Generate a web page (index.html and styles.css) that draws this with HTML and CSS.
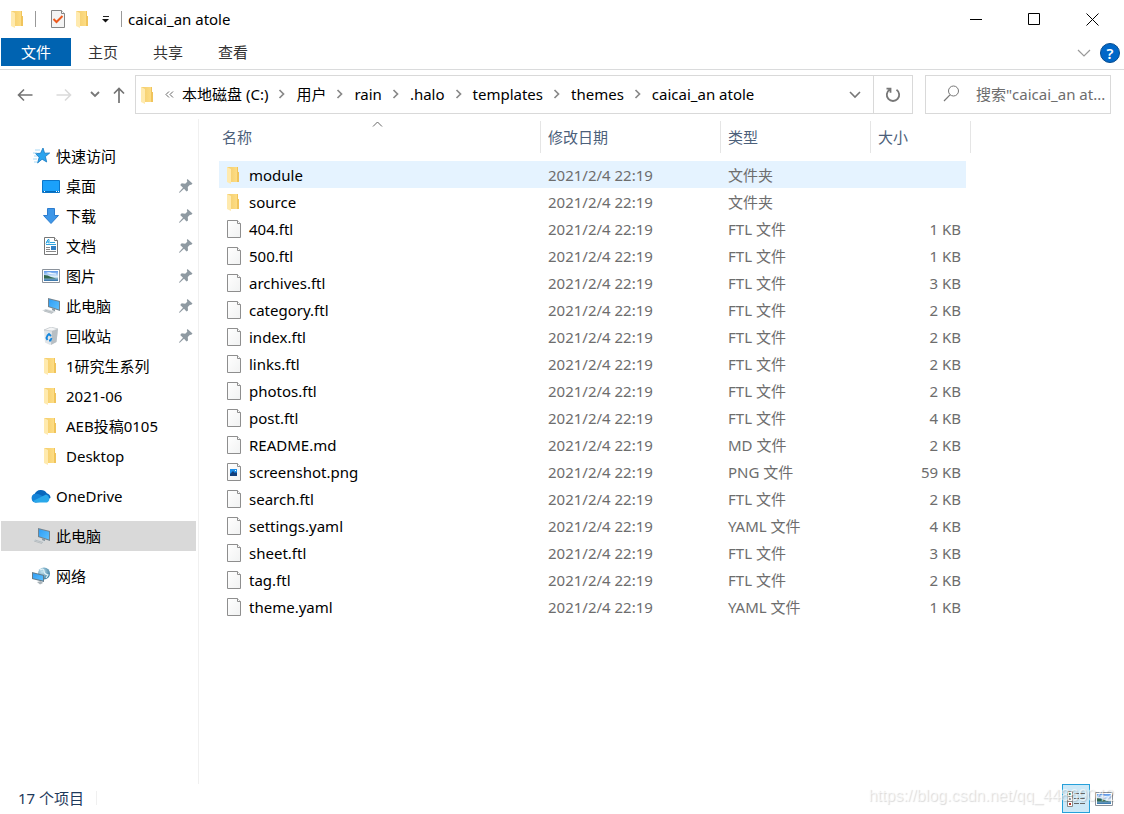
FILE: index.html
```html
<!DOCTYPE html>
<html lang="zh-CN">
<head>
<meta charset="utf-8">
<title>caicai_an atole</title>
<link rel="stylesheet" href="styles.css">
</head>
<body>
<svg class="sprite" aria-hidden="true">
  <defs>
    <linearGradient id="gFold" x1="0" y1="0" x2="1" y2="0"><stop offset="0" stop-color="#f3cc6a"/><stop offset="1" stop-color="#ffe08a"/></linearGradient>
    <linearGradient id="gPage" x1="0" y1="0" x2="1" y2="1"><stop offset="0" stop-color="#ffffff"/><stop offset="1" stop-color="#f1f2f2"/></linearGradient>
    <linearGradient id="gBlue" x1="0" y1="0" x2="1" y2="1"><stop offset="0" stop-color="#2f9df4"/><stop offset="1" stop-color="#5cc0ff"/></linearGradient>
    <linearGradient id="gSky" x1="0" y1="0" x2="0" y2="1"><stop offset="0" stop-color="#5b97ea"/><stop offset=".6" stop-color="#e6f4fc"/><stop offset=".7" stop-color="#8fb9cf"/><stop offset="1" stop-color="#2e6ea8"/></linearGradient>
    <radialGradient id="gGlobe" cx=".35" cy=".35" r=".7"><stop offset="0" stop-color="#c5e4f0"/><stop offset="1" stop-color="#3c7ea2"/></radialGradient>
  </defs>
  <symbol id="folder" viewBox="0 0 18 18"><path d="M2 1h11v5h1v10H6z" fill="url(#gFold)"/><path d="M12 1h1v5h1v10h-2z" fill="#f0c45c"/><path d="M2 1l4 2v15l-4-2z" fill="#ffeaae"/></symbol>
  <symbol id="page" viewBox="0 0 18 18"><path d="M2.500.5h10l3 3v14h-13z" fill="url(#gPage)" stroke="#8e8e8e"/><path d="M12.500.5v3h3" fill="#fff" stroke="#8e8e8e"/></symbol>
  <symbol id="picfile" viewBox="0 0 18 18"><use href="#page"/><path d="M5 6h7v7H5z" fill="#1e8ee8"/><path d="M5 11l3-3 2 2 1-1 1 1v3H5z" fill="#123f7c"/><path d="M10 7h1v1h-1z" fill="#fff"/></symbol>
  <symbol id="checkdoc" viewBox="0 0 18 18"><path d="M2.500.5h10l3 3v14h-13z" fill="#f4f4f4" stroke="#858585"/><path d="M12.500.5v3h3" fill="#fff" stroke="#858585"/><path d="M4.500 9l3 3L13.500 6" fill="none" stroke="#ed5a1f" stroke-width="2"/></symbol>
  <symbol id="star" viewBox="0 0 18 18"><path d="M11 1l1.600 5.200 5.100-.2-4.300 3.600 1.300 5.400-4.600-2.800L5.600 16l1.500-5.600L3.500 6.500l5-.2z" fill="#2ba4ee" stroke="#1579c0" stroke-width=".8"/><path d="M3 3h5M1 6h4M2 9h3M1 12h4M2 15h3" stroke="#8fcff5" stroke-width=".8"/></symbol>
  <symbol id="desktop" viewBox="0 0 18 18"><path d="M.5 3.500h17v12H.5z" fill="#1ba1fb" stroke="#0b76ca"/><path d="M1 14h16v1H1z" fill="#066bb8"/><path d="M2 14h1v1H2zm12 0h1v1h-1zm2 0h1v1h-1z" fill="#fff"/></symbol>
  <symbol id="down" viewBox="0 0 18 18"><path d="M5.500 1.500h7v7h4L9 16.500 1.500 8.500h4z" fill="#3e97e8" stroke="#2c7cce"/></symbol>
  <symbol id="doc" viewBox="0 0 18 18"><path d="M2.500.5h10l3 3v14h-13z" fill="#fff" stroke="#777"/><path d="M12.500.5v3h3" fill="#fff" stroke="#777"/><path d="M4 6.500l2-4h1v4M4.500 5H7" fill="none" stroke="#1e9fe0"/><path d="M8 5.500h5M4 7.500h10" stroke="#30a5e0"/><path d="M4 10.500h4M4 12.500h4M4 14.500h10" stroke="#888"/><path d="M9 9h5v4H9z" fill="#3280c4"/></symbol>
  <symbol id="photo" viewBox="0 0 18 18"><path d="M.5 2.500h17v13H.5z" fill="#fff" stroke="#8b929b"/><path d="M2 4h14v10H2z" fill="url(#gSky)"/><path d="M2 8q4 0 7 2l5 1.500H2z" fill="#33684f"/><path d="M4 6q3-1.500 6 0l4 .5v1L8 7z" fill="#eef7ff"/></symbol>
  <symbol id="pc" viewBox="0 0 18 18"><path d="M6 1l12 3v10L6 10z" fill="#73838e"/><path d="M7 2.200l10 2.600v7.800L7 9.200z" fill="url(#gBlue)"/><path d="M10 11.200l3 1v2l-3-1z" fill="#8b98a0"/><path d="M0 13.500l4-1.500 10 2.500-4 2z" fill="#d4d9dc"/><path d="M3 13l8 2.500M2 14l8 2.500" stroke="#9fa8ad" stroke-width=".6"/></symbol>
  <symbol id="bin" viewBox="0 0 18 18"><path d="M2 3l7-3 7 2-1.500 13L8 18l-5-2.500z" fill="#e1e5e8"/><path d="M10 4l6-2-1.500 13L9 18z" fill="#b8bfc4"/><path d="M2 3l7-3 7 2-6 2z" fill="#f4f5f6" stroke="#b7bdc2" stroke-width=".6"/><path d="M5 9l2-2 2 2M9.500 11l-1 2.500H7M5.500 13L4.400 11l1-2" fill="none" stroke="#1486dc" stroke-width="1.800"/></symbol>
  <symbol id="cloud" viewBox="0 0 20 14"><path d="M5 13.500A4.500 4.500 0 0 1 3.500 5a7 7 0 0 1 12.300-.8A5 5 0 0 1 19.500 9L9 13z" fill="#0767bd"/><path d="M3.500 5A6 6 0 0 1 9 5.800L15 9 4.500 13.500A4.400 4.400 0 0 1 3.500 5z" fill="#1483d8"/><path d="M2 12l9-4.500 4-2a4.300 4.300 0 0 1 1 8H5a5 5 0 0 1-3-1.500z" fill="#29a8ea"/></symbol>
  <symbol id="net" viewBox="0 0 18 18"><circle cx="12" cy="6.500" r="6" fill="url(#gGlobe)"/><path d="M8 3q4-2 4 1t4 4l-2 3" fill="none" stroke="#e2f3f8" stroke-width="1.200"/><path d="M0 5l12 3v7L0 12z" fill="#647c8a"/><path d="M1 6.300l10 2.500v4.800L1 11.200z" fill="url(#gBlue)"/><path d="M5 15l4-1 2 2-3 1.500z" fill="#a9b3b9"/></symbol>
  <symbol id="pin" viewBox="0 0 14 14"><path d="M8.500 0L13.500 4.500l-1.500 1.500-1-.2L8.800 8l.2 3.500L7.500 12.500 5 9.700 1 13.500 0 14l.4-1.200L4 8.700 1.200 6l1.500-1.700 3.500.4L8.300 2.800 7.800 1z" fill="#8f9aa2"/></symbol>
  <symbol id="sep" viewBox="0 0 8 10"><path d="M1.500 1L5.500 5 1.500 9" fill="none" stroke="#888" stroke-width="1.700"/></symbol>
</svg>

<header class="titlebar">
  <div class="quick">
    <svg class="ico"><use href="#folder"/></svg>
    <span class="bar"></span>
    <button class="bare" aria-label="属性"><svg class="ico"><use href="#checkdoc"/></svg></button>
    <button class="bare" aria-label="新建文件夹"><svg class="ico"><use href="#folder"/></svg></button>
    <button class="bare caret" aria-label="自定义快速访问工具栏"><svg width="8" height="8"><path d="M1 1.500h6" stroke="#222"/><path d="M0 4h7L3.500 7.500z" fill="#111"/></svg></button>
    <span class="bar"></span>
  </div>
  <h1 class="title">caicai_an atole</h1>
  <div class="controls">
    <button class="bare control" aria-label="最小化"><svg width="13" height="13"><path d="M0 6.500h12" stroke="#000"/></svg></button>
    <button class="bare control" aria-label="最大化"><svg width="13" height="13"><path d="M.5.5h11v11H.5z" fill="none" stroke="#000"/></svg></button>
    <button class="bare control" aria-label="关闭"><svg width="13" height="13"><path d="M.5.5l12 12m0-12l-12 12" stroke="#000"/></svg></button>
  </div>
</header>

<nav class="ribbon">
  <button class="bare tab tab-file">文件</button>
  <button class="bare tab">主页</button>
  <button class="bare tab">共享</button>
  <button class="bare tab">查看</button>
  <div class="ribbon-end">
    <button class="bare" aria-label="展开功能区"><svg width="14" height="8"><path d="M1 1l6 6 6-6" fill="none" stroke="#999" stroke-width="1.200"/></svg></button>
    <button class="bare help" aria-label="帮助">?</button>
  </div>
</nav>

<div class="addressbar">
  <div class="history">
    <button class="bare nav" aria-label="返回"><svg width="16" height="14"><path d="M15.500 7H1.500M7 1.500L1.500 7 7 12.500" fill="none" stroke="#737373" stroke-width="1.600"/></svg></button>
    <button class="bare nav" aria-label="前进"><svg width="16" height="14"><path d="M.5 7h14M9 1.500L14.500 7 9 12.500" fill="none" stroke="#dadada" stroke-width="1.600"/></svg></button>
    <button class="bare nav-small" aria-label="最近浏览的位置"><svg width="10" height="7"><path d="M1 1l4 4 4-4" fill="none" stroke="#777" stroke-width="1.800"/></svg></button>
    <button class="bare nav-small" aria-label="上移"><svg width="12" height="16"><path d="M6 16V1.500M1 6.500l5-5 5 5" fill="none" stroke="#737373" stroke-width="1.700"/></svg></button>
  </div>
  <div class="address">
    <svg class="ico"><use href="#folder"/></svg>
    <button class="bare more" aria-label="更多"><svg width="9" height="7"><path d="M4 .5l-3 3 3 3M8 .5l-3 3 3 3" fill="none" stroke="#666"/></svg></button>
    <div class="crumbs">
      <a href="#c">本地磁盘 (C:)</a><svg class="sep"><use href="#sep"/></svg>
      <a href="#users">用户</a><svg class="sep"><use href="#sep"/></svg>
      <a href="#rain">rain</a><svg class="sep"><use href="#sep"/></svg>
      <a href="#halo">.halo</a><svg class="sep"><use href="#sep"/></svg>
      <a href="#templates">templates</a><svg class="sep"><use href="#sep"/></svg>
      <a href="#themes">themes</a><svg class="sep"><use href="#sep"/></svg>
      <a href="#theme">caicai_an atole</a>
    </div>
    <button class="bare drop" aria-label="以前的位置"><svg width="12" height="8"><path d="M1 1l5 5 5-5" fill="none" stroke="#777" stroke-width="1.600"/></svg></button>
    <button class="bare refresh" aria-label="刷新"><svg width="16" height="16"><path d="M11.500 2.700A6.200 6.200 0 1 1 4.500 2.700M1.500 1.700h4v4" fill="none" stroke="#777" stroke-width="1.800"/></svg></button>
  </div>
  <label class="search">
    <svg width="17" height="17"><circle cx="10.500" cy="6" r="5" fill="none" stroke="#777"/><path d="M7 9.800L1 16" stroke="#777" stroke-width="1.200"/></svg>
    <input type="text" aria-label="搜索" placeholder="搜索&quot;caicai_an at...">
  </label>
</div>

<main class="content">
  <nav class="side">
    <a class="place" href="#quick"><svg class="ico"><use href="#star"/></svg>快速访问</a>
    <a class="place child" href="#desktop"><svg class="ico"><use href="#desktop"/></svg>桌面<svg class="pin"><use href="#pin"/></svg></a>
    <a class="place child" href="#downloads"><svg class="ico"><use href="#down"/></svg>下载<svg class="pin"><use href="#pin"/></svg></a>
    <a class="place child" href="#documents"><svg class="ico"><use href="#doc"/></svg>文档<svg class="pin"><use href="#pin"/></svg></a>
    <a class="place child" href="#pictures"><svg class="ico"><use href="#photo"/></svg>图片<svg class="pin"><use href="#pin"/></svg></a>
    <a class="place child" href="#pc"><svg class="ico"><use href="#pc"/></svg>此电脑<svg class="pin"><use href="#pin"/></svg></a>
    <a class="place child" href="#bin"><svg class="ico"><use href="#bin"/></svg>回收站<svg class="pin"><use href="#pin"/></svg></a>
    <a class="place child" href="#f1"><svg class="ico"><use href="#folder"/></svg>1研究生系列</a>
    <a class="place child" href="#f2"><svg class="ico"><use href="#folder"/></svg>2021-06</a>
    <a class="place child" href="#f3"><svg class="ico"><use href="#folder"/></svg>AEB投稿0105</a>
    <a class="place child" href="#f4"><svg class="ico"><use href="#folder"/></svg>Desktop</a>
    <a class="place root" href="#onedrive"><svg class="cloud"><use href="#cloud"/></svg>OneDrive</a>
    <a class="place root current" href="#thispc"><svg class="ico"><use href="#pc"/></svg>此电脑</a>
    <a class="place root" href="#network"><svg class="ico"><use href="#net"/></svg>网络</a>
  </nav>

  <section class="files">
    <table>
      <colgroup><col class="c-name"><col class="c-date"><col class="c-type"><col class="c-size"></colgroup>
      <thead>
        <tr><th class="sorted">名称<svg class="sort" width="11" height="6"><path d="M1 5.500l4.500-4.500L10 5.500" fill="none" stroke="#666"/></svg></th><th>修改日期</th><th>类型</th><th>大小</th></tr>
      </thead>
      <tbody>
        <tr class="hot"><td><span class="file"><svg class="ico"><use href="#folder"/></svg>module</span></td><td>2021/2/4 22:19</td><td>文件夹</td><td></td></tr>
        <tr><td><span class="file"><svg class="ico"><use href="#folder"/></svg>source</span></td><td>2021/2/4 22:19</td><td>文件夹</td><td></td></tr>
        <tr><td><span class="file"><svg class="ico"><use href="#page"/></svg>404.ftl</span></td><td>2021/2/4 22:19</td><td>FTL 文件</td><td>1 KB</td></tr>
        <tr><td><span class="file"><svg class="ico"><use href="#page"/></svg>500.ftl</span></td><td>2021/2/4 22:19</td><td>FTL 文件</td><td>1 KB</td></tr>
        <tr><td><span class="file"><svg class="ico"><use href="#page"/></svg>archives.ftl</span></td><td>2021/2/4 22:19</td><td>FTL 文件</td><td>3 KB</td></tr>
        <tr><td><span class="file"><svg class="ico"><use href="#page"/></svg>category.ftl</span></td><td>2021/2/4 22:19</td><td>FTL 文件</td><td>2 KB</td></tr>
        <tr><td><span class="file"><svg class="ico"><use href="#page"/></svg>index.ftl</span></td><td>2021/2/4 22:19</td><td>FTL 文件</td><td>2 KB</td></tr>
        <tr><td><span class="file"><svg class="ico"><use href="#page"/></svg>links.ftl</span></td><td>2021/2/4 22:19</td><td>FTL 文件</td><td>2 KB</td></tr>
        <tr><td><span class="file"><svg class="ico"><use href="#page"/></svg>photos.ftl</span></td><td>2021/2/4 22:19</td><td>FTL 文件</td><td>2 KB</td></tr>
        <tr><td><span class="file"><svg class="ico"><use href="#page"/></svg>post.ftl</span></td><td>2021/2/4 22:19</td><td>FTL 文件</td><td>4 KB</td></tr>
        <tr><td><span class="file"><svg class="ico"><use href="#page"/></svg>README.md</span></td><td>2021/2/4 22:19</td><td>MD 文件</td><td>2 KB</td></tr>
        <tr><td><span class="file"><svg class="ico"><use href="#picfile"/></svg>screenshot.png</span></td><td>2021/2/4 22:19</td><td>PNG 文件</td><td>59 KB</td></tr>
        <tr><td><span class="file"><svg class="ico"><use href="#page"/></svg>search.ftl</span></td><td>2021/2/4 22:19</td><td>FTL 文件</td><td>2 KB</td></tr>
        <tr><td><span class="file"><svg class="ico"><use href="#page"/></svg>settings.yaml</span></td><td>2021/2/4 22:19</td><td>YAML 文件</td><td>4 KB</td></tr>
        <tr><td><span class="file"><svg class="ico"><use href="#page"/></svg>sheet.ftl</span></td><td>2021/2/4 22:19</td><td>FTL 文件</td><td>3 KB</td></tr>
        <tr><td><span class="file"><svg class="ico"><use href="#page"/></svg>tag.ftl</span></td><td>2021/2/4 22:19</td><td>FTL 文件</td><td>2 KB</td></tr>
        <tr><td><span class="file"><svg class="ico"><use href="#page"/></svg>theme.yaml</span></td><td>2021/2/4 22:19</td><td>YAML 文件</td><td>1 KB</td></tr>
      </tbody>
    </table>
  </section>
</main>

<footer class="status">
  <span class="count">17 个项目</span>
  <div class="views">
    <button class="bare view active" aria-label="详细信息"><svg width="18" height="16"><path d="M.5.5h5v15h-5zM.5 5.500h5M.5 10.500h5" fill="#fff" stroke="#8a8a8a"/><path d="M2 2h2v2H2z" fill="#3c8a58"/><path d="M2 7h2v2H2z" fill="#999"/><path d="M2 12h2v2H2z" fill="#b8352a"/><path d="M7 2.500h5m1 0h5M7 7.500h5m1 0h5M7 12.500h5m1 0h5" stroke="#666"/></svg></button>
    <button class="bare view" aria-label="大图标"><svg class="ico"><use href="#photo"/></svg></button>
  </div>
  <span class="watermark">https://blog.csdn.net/qq_44869042</span>
</footer>
</body>
</html>
```
FILE: styles.css
```css
* { box-sizing: border-box; }

body {
  margin: 0;
  min-height: 100vh;
  display: flex;
  flex-direction: column;
  background: #fff;
  color: #000;
  font: 15px/20px "Noto Sans", "Noto Sans CJK SC", sans-serif;
}

svg { display: block; flex: none; }
a { color: inherit; text-decoration: none; }

.sprite { position: absolute; width: 0; height: 0; }
.ico { width: 18px; height: 18px; }
.cloud { width: 20px; height: 14px; }

.bare {
  display: flex;
  align-items: center;
  justify-content: center;
  padding: 0;
  border: 0;
  background: none;
  font: inherit;
  color: inherit;
}

/* Title bar */
.titlebar { display: flex; align-items: center; height: 38px; padding-left: 9px; }
.quick { display: flex; align-items: center; gap: 7px; }
.quick .bar { width: 1px; height: 16px; margin: 0 6px 0 1px; background: #999; }
.quick .caret { width: 14px; height: 18px; }
.title { flex: 1; margin: 0; font-size: 15px; font-weight: 400; }
.controls { display: flex; padding-right: 3px; }
.control { width: 58px; height: 38px; }

/* Ribbon tabs */
.ribbon { display: flex; height: 32px; padding-left: 1px; border-bottom: 1px solid #dadbdc; color: #333; }
.tab { width: 64px; height: 28px; }
.tab + .tab { margin-right: 1px; }
.tab-file { width: 70px; background: #0063b1; color: #fff; }
.ribbon-end { display: flex; align-items: center; gap: 9px; height: 30px; margin-left: auto; padding-right: 4px; }
.help { width: 20px; height: 20px; border-radius: 50%; border: 1px solid #064b8e; background: #0067c8; color: #fff; font-weight: 600; font-size: 15px; }

/* Address row */
.addressbar { display: flex; align-items: center; height: 49px; padding-right: 13px; }
.history { display: flex; align-items: center; width: 135px; padding-left: 5px; }
.nav { width: 39px; height: 30px; }
.nav-small { width: 24px; height: 30px; }
.address { display: flex; flex: 1; align-items: center; height: 39px; padding-left: 3px; border: 1px solid #d9d9d9; }
.more { width: 18px; height: 30px; margin-left: 3px; }
.crumbs { display: flex; flex: 1; align-items: center; gap: 10px; padding: 0 0 2px 4px; white-space: nowrap; }
.sep { width: 8px; height: 10px; }
.drop { width: 36px; height: 37px; }
.refresh { width: 39px; height: 37px; border-left: 1px solid #d9d9d9; }
.search { display: flex; align-items: center; gap: 16px; width: 186px; height: 39px; margin-left: 12px; padding: 0 0 2px 17px; border: 1px solid #d9d9d9; }
.search input { flex: 1; min-width: 0; padding: 0; border: 0; outline: 0; background: none; font: inherit; }
.search input::placeholder { color: #6d6d6d; opacity: 1; }

/* Panes */
.content { display: flex; flex: 1; }
.side { width: 199px; padding: 22px 2px 0 1px; border-right: 1px solid #f0f0f0; }
.place { display: flex; align-items: center; gap: 6px; height: 30px; padding-left: 31px; }
.child { padding-left: 41px; }
.root { margin-bottom: 10px; }
.child + .root { margin-top: 10px; padding-left: 30px; gap: 5px; }
.current { background: #d9d9d9; }
.pin { width: 14px; height: 14px; margin-left: auto; margin-right: 3px; }

/* File list */
.files { flex: 1; padding: 2px 0 0 20px; }
table { table-layout: fixed; width: 752px; border-spacing: 0; }
.c-name { width: 322px; }
.c-date { width: 180px; }
.c-type { width: 150px; }
.c-size { width: 100px; }
th { height: 32px; padding: 0 7px; border-right: 1px solid #e5e5e5; color: #4c607a; font-weight: 400; text-align: left; }
th:first-child { padding-left: 3px; }
.sorted { position: relative; }
.sort { position: absolute; top: 0; left: 153px; }
tbody::before { content: ""; display: block; height: 8px; }
td { height: 27px; padding: 0 7px; color: #6d6d6d; }
td:first-child { padding-left: 6px; color: #000; }
td:last-child { padding-right: 5px; border-right: 5px solid transparent; background-clip: padding-box; text-align: right; }
.file { display: flex; align-items: center; gap: 6px; }
.hot td { background-color: #e5f3ff; }

/* Status bar */
.status { position: relative; display: flex; align-items: flex-start; height: 30px; padding: 0 6px 0 18px; color: #1e395b; }
.count { margin-top: 7px; padding-right: 12px; border-right: 1px solid #f0f0f0; line-height: 14px; }
.views { display: flex; margin-left: auto; }
.view { width: 28px; height: 29px; border: 1px solid transparent; }
.view.active { border-color: #26a0da; background: #cce8f7; }
.watermark {
  position: absolute;
  right: 10px;
  top: 2px;
  color: rgba(255, 255, 255, .6);
  font: 16px/20px "Liberation Sans", Arial, sans-serif;
  text-shadow: 1px 1px 1px rgba(0, 0, 0, .15);
  pointer-events: none;
}
```
